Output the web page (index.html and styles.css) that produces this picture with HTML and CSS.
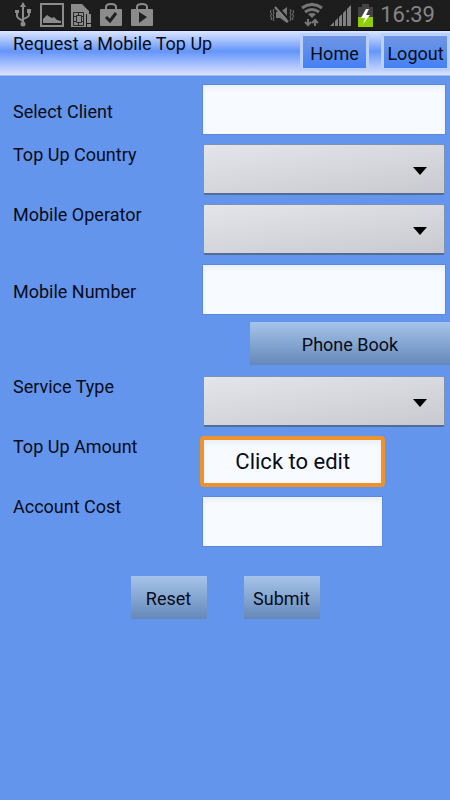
FILE: index.html
```html
<!DOCTYPE html>
<html lang="en">
<head>
<meta charset="utf-8">
<meta name="viewport" content="width=device-width, initial-scale=1">
<title>Request a Mobile Top Up</title>
<link rel="stylesheet" href="styles.css">
</head>
<body>
<div class="status">
  <div class="status-group notices">
    <svg width="18" height="26" viewBox="0 0 18 26" fill="none" stroke="#8b8b8b" stroke-width="2"><path d="M8 4v18M2 10v4q0 2 6 5M14 9v4q0 2-6 4"/><path d="M8 0l3 5H5zM0 8h4v3H0zM12 7h4v4h-4z" fill="#8b8b8b" stroke="none"/><circle cx="8" cy="22" r="2.5" fill="#8b8b8b" stroke="none"/></svg>
    <svg width="24" height="24" viewBox="0 0 24 24"><path d="M1 1h22v22H1z" fill="none" stroke="#8b8b8b" stroke-width="2"/><path d="M3 20v-4l4-4 3 2 2 1 2-1 3 3 4 1v2z" fill="#8b8b8b"/></svg>
    <svg width="21" height="25" viewBox="0 0 21 25"><path d="M0 1h11l7 7v3h-3v13H0z" fill="#8b8b8b"/><path d="M2.500 9.500h10v13h-10zM3 13.500h2M3 18.500h2M10 13.500h2M10 18.500h2M7.500 10v2M7.500 20v2M5.500 12.500h5v7h-5z" fill="none" stroke="#292929"/><path d="M16 11h4v9h-4zM16 21h4v3h-4z" fill="#8b8b8b"/></svg>
    <svg width="24" height="24" viewBox="0 0 24 24"><path d="M7 7V4q0-3 5-3t5 3v3" fill="none" stroke="#8b8b8b" stroke-width="2"/><rect x="1" y="6" width="22" height="17" rx="1" fill="#8b8b8b"/><path d="M7 14l4 4 6-8" fill="none" stroke="#202020" stroke-width="3"/></svg>
    <svg width="24" height="24" viewBox="0 0 24 24"><path d="M7 7V4q0-3 5-3t5 3v3" fill="none" stroke="#8b8b8b" stroke-width="2"/><rect x="1" y="6" width="22" height="17" rx="1" fill="#8b8b8b"/><path d="M9 9l8 5-8 6z" fill="#202020"/></svg>
  </div>
  <div class="status-group signals">
    <svg width="24" height="18" viewBox="0 0 24 18"><path d="M6 6h4l7-5v16l-7-5H6z" fill="#777"/><path d="M7 0l13 15" stroke="#1d1d1d" stroke-width="2"/><path d="M5 1l13 15" stroke="#808080" stroke-width="2"/><path d="M4 3L3 5l1 2-1 2 1 2-1 2 1 2M1 4L0.500 6l1 2-1 2 1 2-.5 2M20 3l1 2-1 2 1 2-1 2 1 2-1 2M23 4l.5 2-1 2 1 2-1 2 .5 2" fill="none" stroke="#777"/></svg>
    <svg width="22" height="24" viewBox="0 0 22 24" fill="none" stroke="#777" stroke-width="3"><path d="M1 5q10-7 20 0M4 9q7-5 14 0"/><path d="M7 11q4-2 8 0l-4 4z" fill="#777" stroke="none"/><path d="M7 16v6M4 19l3 3 3-3M14 23v-6M11 20l3-3 3 3" stroke-width="2"/></svg>
    <svg width="21" height="21" viewBox="0 0 21 21" fill="#808080"><path d="M0 21l4-4v4zM5 16l3-3v8H5zM9 12l3-3v12H9zM13 8l3-3v16h-3zM17 4l4-4v21h-4z"/></svg>
    <svg width="15" height="23" viewBox="0 0 15 23"><path d="M4 0h7v3h4v10H0V3h4z" fill="#444"/><path d="M0 13h15v10H0z" fill="#8fce00"/><path d="M8 5L3 14h4l-2 6 7-9H8l3-6z" fill="#fff"/></svg>
    <time class="clock">16:39</time>
  </div>
</div>
<header class="header">
  <h1 class="title">Request a Mobile Top Up</h1>
  <nav class="nav">
    <button type="button" class="nav-button">Home</button>
    <button type="button" class="nav-button">Logout</button>
  </nav>
</header>
<form class="form">
  <div class="row centered">
    <label for="client">Select Client</label>
    <input class="field" id="client" type="text">
  </div>
  <div class="row">
    <label for="country">Top Up Country</label>
    <div class="picker"><select id="country"></select></div>
  </div>
  <div class="row">
    <label for="operator">Mobile Operator</label>
    <div class="picker"><select id="operator"></select></div>
  </div>
  <div class="row centered">
    <label for="number">Mobile Number</label>
    <input class="field" id="number" type="tel">
  </div>
  <button type="button" class="action phone-book">Phone Book</button>
  <div class="row">
    <label for="service">Service Type</label>
    <div class="picker"><select id="service"></select></div>
  </div>
  <div class="row">
    <label for="amount">Top Up Amount</label>
    <input class="field short active" id="amount" type="text" value="Click to edit">
  </div>
  <div class="row">
    <label for="cost">Account Cost</label>
    <input class="field short" id="cost" type="text">
  </div>
  <div class="actions">
    <button type="reset" class="action">Reset</button>
    <button type="submit" class="action">Submit</button>
  </div>
</form>
</body>
</html>
```
FILE: styles.css
```css
* {
  box-sizing: border-box;
}

body {
  margin: 0;
  min-height: 100vh;
  background: #6495ed;
  color: #080c18;
  font: 18px/22px Roboto, sans-serif;
}

button,
input,
select {
  margin: 0;
  font: inherit;
  color: inherit;
}

svg {
  display: block;
}

.status {
  display: flex;
  align-items: center;
  justify-content: space-between;
  height: 31px;
  padding: 0 15px;
  background: #1d1d1d;
  border-bottom: 1px solid #0b0f1c;
}

.status-group {
  display: flex;
  align-items: center;
}

.notices {
  gap: 7px;
}

.signals {
  gap: 7px;
}

.clock {
  color: #858585;
  font-size: 22px;
}

.header {
  display: flex;
  justify-content: space-between;
  height: 45px;
  padding: 2px 0 0 13px;
  background: linear-gradient(#dce6ff, #6495fa 45%, #dce2ff 98%, #5b86d4);
}

.title {
  margin: 0;
  font-size: 18px;
  font-weight: 400;
}

.nav {
  display: flex;
  gap: 12px;
}

.nav-button {
  width: 69px;
  height: 38px;
  padding: 4px 0 0;
  border: 3px solid #b9d0fc;
  background: linear-gradient(#7096e4, #4481f4);
}

.form {
  display: flex;
  flex-direction: column;
  gap: 9px;
  padding-top: 8px;
}

.row {
  display: grid;
  grid-template-columns: 202fr 244fr;
  align-items: start;
  padding-right: 4px;
}

.row label {
  padding-left: 13px;
}

.centered {
  align-items: center;
}

.centered label {
  padding-top: 4px;
}

.field {
  width: 100%;
  height: 51px;
  padding: 0 8px;
  border: 1px solid #5d89da;
  background: #f7fbff;
  box-shadow: inset 0 3px 5px #e8eef6;
  outline: none;
}

.short {
  width: 74%;
}

.active {
  width: 76%;
  margin-left: -2px;
  border: 4px solid #ee922a;
  border-radius: 4px;
  font-size: 22px;
  text-align: center;
}

.picker {
  position: relative;
  margin: 0 1px;
}

.picker::after {
  content: "";
  position: absolute;
  top: 23px;
  right: 18px;
  border: 7px solid transparent;
  border-top: 8px solid #000;
  border-bottom: 0;
  pointer-events: none;
}

.picker select {
  display: block;
  appearance: none;
  width: 100%;
  height: 51px;
  padding: 0 40px 0 8px;
  border: 1px solid #7e91b6;
  border-bottom: 2px solid #526b98;
  border-radius: 2px;
  background: linear-gradient(172deg, #e4e5ea, #c9cacf);
}

.action {
  height: 43px;
  padding: 2px 0 0;
  border: 0;
  background: linear-gradient(#a6c4ea, #6488b9);
}

.phone-book {
  align-self: flex-end;
  width: 200px;
  margin: -2px 0 2px;
}

.actions {
  display: flex;
  justify-content: center;
  gap: 37px;
  padding-top: 20px;
}

.actions .action {
  width: 76px;
}
```
